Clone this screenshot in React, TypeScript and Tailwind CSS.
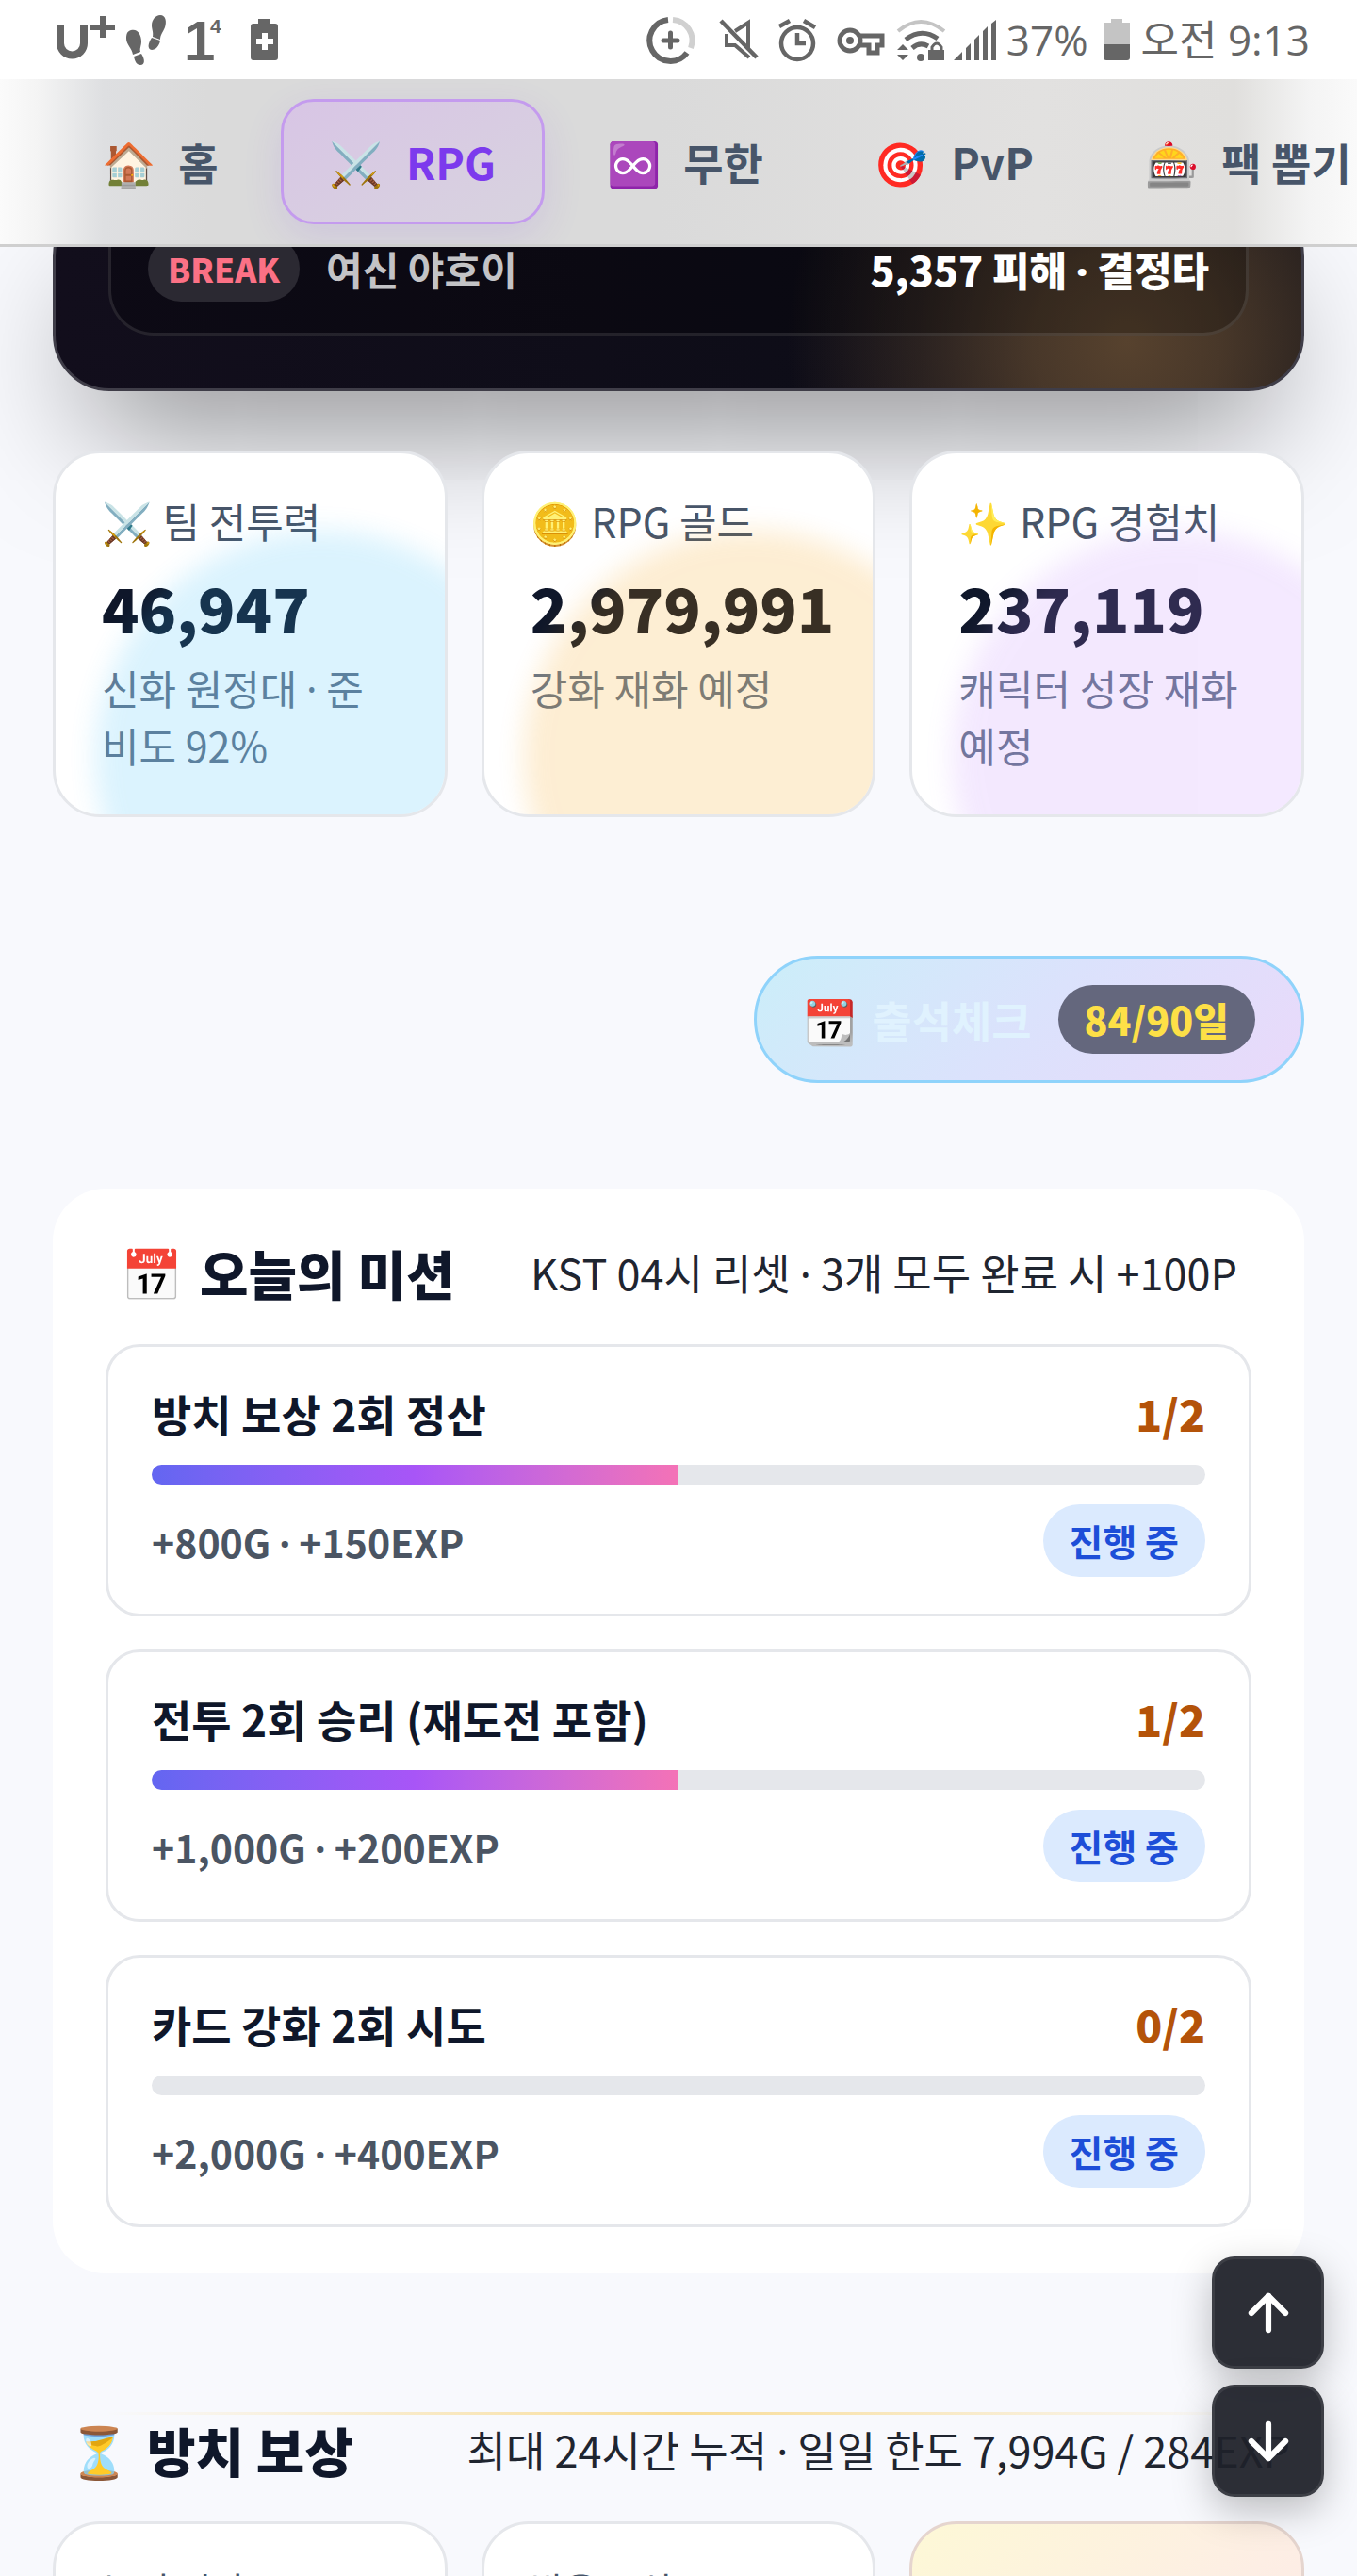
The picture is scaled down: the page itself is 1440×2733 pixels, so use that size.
import React from "react";
import { ArrowDown, ArrowUp } from "lucide-react";

const tabs = [
  { icon: "🏠", label: "홈" },
  { icon: "⚔️", label: "RPG", active: true },
  { icon: "♾️", label: "무한" },
  { icon: "🎯", label: "PvP" },
  { icon: "🎰", label: "팩 뽑기" },
];

const stats = [
  { icon: "⚔️", label: "팀 전투력", value: "46,947", note: "신화 원정대 · 준비도 92%", glow: "bg-[#38bdf8]" },
  { icon: "🪙", label: "RPG 골드", value: "2,979,991", note: "강화 재화 예정", glow: "bg-[#f59e0b]" },
  { icon: "✨", label: "RPG 경험치", value: "237,119", note: "캐릭터 성장 재화 예정", glow: "bg-[#c084fc]" },
];

const missions = [
  { title: "방치 보상 2회 정산", done: 1, total: 2, reward: "+800G · +150EXP" },
  { title: "전투 2회 승리 (재도전 포함)", done: 1, total: 2, reward: "+1,000G · +200EXP" },
  { title: "카드 강화 2회 시도", done: 0, total: 2, reward: "+2,000G · +400EXP" },
];

// Sets the middle dot in a proportional Latin face; the CJK one is too wide.
function Dotted({ text }: { text: string }) {
  return (
    <>
      {text.split("·").map((part, i) => (
        <React.Fragment key={i}>
          {i > 0 && <span className="font-['Noto_Sans',sans-serif] leading-none">·</span>}
          {part}
        </React.Fragment>
      ))}
    </>
  );
}

function StatusBar() {
  return (
    <div className="flex h-[84px] items-center justify-between bg-white pr-[50px] pl-[40px] text-[#666]">
      <svg width="280" height="84" viewBox="0 0 280 84" fill="currentColor" aria-hidden="true">
        <path d="M24 26V46a12.5 12.5 0 0 0 25 0V26" fill="none" stroke="currentColor" strokeWidth="8" />
        <path d="M56 29h26M69 17v23" fill="none" stroke="currentColor" strokeWidth="6" />
        <path d="M99 32c7-2 11 5 11 12 0 5-2 7-1 11l-8 3c-1-7-7-11-7-17 0-5 1-8 5-9zM102 60l8-3c4 6 4 12-1 12-4 0-6-4-7-9z" />
        <path d="M130 16c6 0 7 7 5 13-2 5-5 8-5 13l-8-3c1-5-1-8-1-12 0-6 4-11 9-11zM121 40l9 3c-1 6-5 10-9 10-5-1-4-7 0-13z" />
        <text x="155" y="64" fontSize="60" fontWeight="700" fontFamily="Liberation Sans, sans-serif">1</text>
        <text x="183" y="35" fontSize="21" fontWeight="700" fontFamily="Liberation Sans, sans-serif">4</text>
        <path d="M234 20v5h-5q-3 0-3 3v33q0 3 3 3h23q3 0 3-3V28q0-3-3-3h-5v-5zM238 35h6v6h6v6h-6v6h-6v-6h-6v-6h6z" fillRule="evenodd" />
      </svg>
      <div className="flex items-center font-['Open_Sans','Noto_Sans_CJK_KR',sans-serif] text-[44px] leading-none">
        <svg width="386" height="84" viewBox="0 0 386 84" fill="none" stroke="currentColor" strokeWidth="5" aria-hidden="true">
          <path d="M36 21A22 22 0 1 0 56 56" strokeWidth="6" />
          <path d="M41 21A22 22 0 0 1 60 51" stroke="#d0d0d0" strokeWidth="6" />
          <path d="M31 43h15M38.500 35v15" strokeLinecap="round" />
          <path d="M92 22l38 39" strokeWidth="4.500" />
          <path d="M98 36v12h9l15 13M107 33l14-9v28" strokeWidth="4" />
          <circle cx="173" cy="46" r="17" strokeWidth="4.500" />
          <path d="M173 35v11h9M154 28l11-6M180 22l12 7" strokeWidth="4.500" />
          <circle cx="229" cy="43" r="11" />
          <circle cx="229" cy="43" r="4" fill="currentColor" stroke="none" />
          <path d="M239 38h24v10h-5v8h-9v-8h-10" />
          <path d="M280 33q24-20 49 0" stroke="#c4c4c4" strokeWidth="4" />
          <path d="M288 42q17-13 34-1M295 51q8-7 17-2" />
          <path d="M279 53l6-6 6 6zM279 58l6 6 6-6zM312 53h17v11h-17z" fill="currentColor" stroke="none" />
          <circle cx="304" cy="61" r="4" fill="currentColor" stroke="none" />
          <path d="M316 54v-4q5-8 10 0v4" strokeWidth="3" />
          <path d="M339 64l9-9v9zM352 64V51l5-5v18zM361 64V42l5-5v27zM370 64V33l5-5v36zM379 64V25l5-4v43z" fill="currentColor" stroke="none" />
        </svg>
        <span className="ml-[9px]">37%</span>
        <svg width="28" height="44" viewBox="0 0 28 44" aria-hidden="true" className="ml-[16px]">
          <path d="M0 42V4h8V0h12v4h8v38z" fill="#c4c4c4" />
          <path d="M0 27h28v14q0 3-3 3H3q-3 0-3-3z" fill="#666" />
        </svg>
        <span className="ml-[12px]">오전 9:13</span>
      </div>
    </div>
  );
}

function NavBar() {
  return (
    <nav className="relative z-10 flex gap-[14px] overflow-hidden border-b-[3px] border-[#cfcfcf] bg-[linear-gradient(90deg,#fbfbfb_0px,#f4f4f4_40px,#dedfe1_110px,#dadada_220px,#dadada_700px,#e2e1e0_1100px,#e0dfdd_1310px,#f4f4f4_1390px,#fafafa_1440px)] px-[56px] py-[21px]">
      {tabs.map((t) => (
        <button
          key={t.label}
          type="button"
          className={
            t.active
              ? "flex h-[133px] shrink-0 items-center gap-[24px] rounded-[35px] border-[3px] border-[#c49bee] bg-linear-to-br from-[#d8c5e5] to-[#d8d3df] px-[49px] text-[46px] font-bold text-[#7c3aed] shadow-[0_14px_42px_rgba(124,58,237,0.12)]"
              : "flex h-[133px] shrink-0 items-center gap-[24px] rounded-[35px] border-[3px] border-transparent px-[49px] text-[46px] font-bold text-[#475569]"
          }
        >
          <span>{t.icon}</span>
          <span>{t.label}</span>
        </button>
      ))}
    </nav>
  );
}

function BattleLog() {
  return (
    <section className="-mt-[50px] rounded-[60px] border-[3px] border-[#3f3d48] bg-[radial-gradient(circle_at_86%_75%,#57422e_0,#57422ecc_100px,#57422e66_220px,#57422e00_360px),linear-gradient(90deg,#120e1c,#0b0c15)] px-[56px] pb-[56px] shadow-[0_70px_140px_-40px_rgba(0,0,0,0.5)]">
      <div className="flex items-center justify-between rounded-b-[48px] border-[3px] border-t-0 border-white/10 bg-black/25 px-[39px] pt-[35px] pb-[33px]">
        <div className="flex items-center gap-[28px]">
          <span className="rounded-full bg-[#2b2932] px-[21px] py-[7px] text-[35px] leading-[56px] font-black text-[#fb7185]">BREAK</span>
          <span className="text-[42px] leading-[60px] font-bold text-[#c3c3c6]">여신 야호이</span>
        </div>
        <strong className="text-[43px] leading-[60px] font-black text-white">
          <Dotted text="5,357 피해 · 결정타" />
        </strong>
      </div>
    </section>
  );
}

function StatCard({ icon, label, value, note, glow }: (typeof stats)[number]) {
  return (
    <article className="relative h-[389px] overflow-hidden rounded-[50px] border-[3px] border-[#e5e7eb] bg-white px-[49px] pt-[41px]">
      <p className="flex gap-[11px] text-[43px] leading-[60px] whitespace-nowrap text-[#475569]">
        <span>{icon}</span>
        <span>{label}</span>
      </p>
      <p className="mt-[22px] text-[65px] leading-[80px] font-black text-[#0f172a]">{value}</p>
      <p className="mt-[15px] text-[43px] leading-[61px] break-all text-[#64748b]">
        <Dotted text={note} />
      </p>
      <div className={"absolute top-[82px] left-[42px] size-[480px] rounded-full opacity-[0.18] blur-[14px] " + glow} />
    </article>
  );
}

function MissionCard({ title, done, total, reward }: (typeof missions)[number]) {
  return (
    <li className="rounded-[36px] border-[3px] border-[#e5e7eb] px-[46px] pt-[37px] pb-[39px]">
      <div className="flex h-[66px] items-center justify-between">
        <h3 className="text-[46px] font-bold text-[#0f172a]">{title}</h3>
        <span className="text-[46px] font-black text-[#b45309]">
          {done}/{total}
        </span>
      </div>
      <div className="mt-[22px] h-[21px] overflow-hidden rounded-full bg-[#e5e7eb]">
        <div className="h-full bg-linear-to-r from-[#6366f1] via-[#a855f7] to-[#f472b6]" style={{ width: `${(done / total) * 100}%` }} />
      </div>
      <div className="mt-[21px] flex items-center justify-between">
        <span className="text-[41px] leading-[60px] font-bold text-[#4b5563]">
          <Dotted text={reward} />
        </span>
        <span className="rounded-full bg-[#dbeafe] px-[28px] text-[39px] leading-[77px] font-bold text-[#1d4ed8]">진행 중</span>
      </div>
    </li>
  );
}

function SectionHeading({ icon, title, note }: { icon: string; title: string; note: string }) {
  return (
    <div className="flex h-[74px] items-center justify-between pr-[15px] pl-[16px]">
      <h2 className="flex items-center gap-[18px] text-[56px] font-black text-[#0f172a]">
        <span className="text-[53px]">{icon}</span>
        <span>{title}</span>
      </h2>
      <p className="text-[45px] text-[#1f2530]">
        <Dotted text={note} />
      </p>
    </div>
  );
}

export default function App() {
  return (
    <div className="relative h-screen overflow-hidden bg-[#f8f9fd] font-['Noto_Sans_CJK_KR','Noto_Color_Emoji',sans-serif]">
      <StatusBar />
      <NavBar />
      <main className="px-[56px]">
        <BattleLog />

        <section className="mt-[63px] grid grid-cols-3 gap-[36px]">
          {stats.map((s) => (
            <StatCard key={s.label} {...s} />
          ))}
        </section>

        <div className="mt-[147px] flex justify-end">
          <button type="button" className="flex h-[135px] items-center gap-[28px] rounded-full border-[3px] border-[#8fd3fb] bg-linear-135 from-[#cbeef9] via-[#dbe2fc] to-[#e9d9fa] px-[49px] text-[46px] font-bold text-[#e0f2fe]">
            <span className="flex gap-[16px]">
              <span>📆</span>
              <span>출석체크</span>
            </span>
            <span className="rounded-full bg-[#64677d] px-[28px] text-[41px] leading-[73px] font-black text-[#fde047]">84/90일</span>
          </button>
        </div>

        <section className="mt-[112px] rounded-[56px] bg-white px-[56px] pt-[52px] pb-[49px]">
          <SectionHeading icon="📅" title="오늘의 미션" note="KST 04시 리셋 · 3개 모두 완료 시 +100P" />
          <ul className="mt-[39px] flex flex-col gap-[35px]">
            {missions.map((m) => (
              <MissionCard key={m.title} {...m} />
            ))}
          </ul>
        </section>

        <section className="mt-[147px]">
          <div className="mx-[56px] h-[3px] bg-linear-to-r from-transparent via-[#f9dd98] to-transparent" />
          <SectionHeading icon="⏳" title="방치 보상" note="최대 24시간 누적 · 일일 한도 7,994G / 284EXP" />
          <div className="mt-[39px] grid grid-cols-3 gap-[36px]">
            <div className="h-[389px] rounded-[50px] border-[3px] border-[#e5e7eb] bg-white px-[49px] pt-[40px] text-[39px] leading-[56px] text-[#475569]">누적 시간</div>
            <div className="h-[389px] rounded-[50px] border-[3px] border-[#e5e7eb] bg-white px-[49px] pt-[40px] text-[39px] leading-[56px] text-[#475569]">받을 보상</div>
            <div className="h-[389px] rounded-[50px] border-[3px] border-[#e5d5cf] bg-linear-to-br from-[#fdf8d6] via-[#fdeee4] to-[#fde4ea]" />
          </div>
        </section>
      </main>

      <div className="absolute right-[35px] bottom-[84px] z-20 flex flex-col gap-[17px]">
        <button type="button" aria-label="맨 위로" className="flex size-[119px] items-center justify-center rounded-[24px] border-[3px] border-white/8 bg-[#1f2129]/94 text-white shadow-[0_14px_42px_rgba(0,0,0,0.25)]">
          <ArrowUp size={62} strokeWidth={2.4} />
        </button>
        <button type="button" aria-label="맨 아래로" className="flex size-[119px] items-center justify-center rounded-[24px] border-[3px] border-white/8 bg-[#1f2129]/94 text-white shadow-[0_14px_42px_rgba(0,0,0,0.25)]">
          <ArrowDown size={62} strokeWidth={2.4} />
        </button>
      </div>
    </div>
  );
}
